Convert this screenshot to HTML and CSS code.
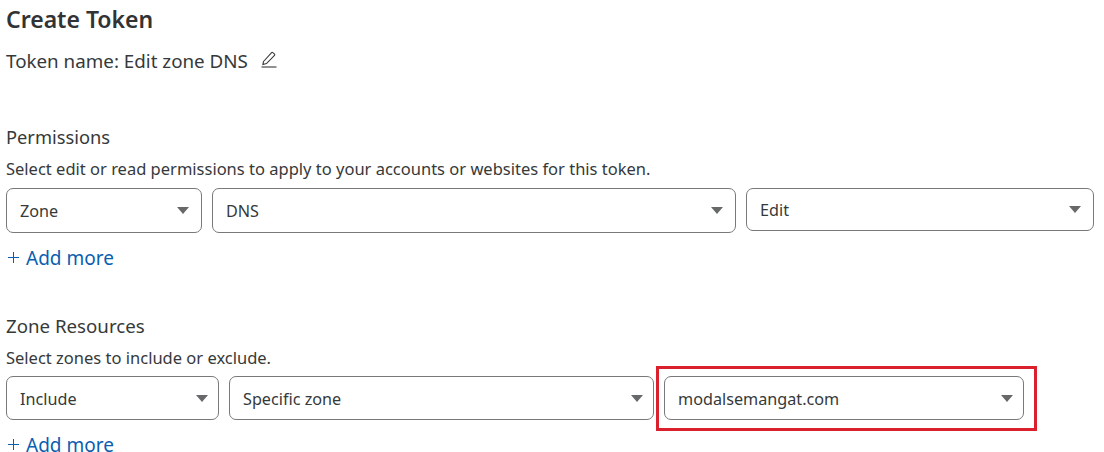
FILE: index.html
```html
<!DOCTYPE html>
<html lang="en">
<head>
<meta charset="utf-8">
<title>Create Token</title>
<link rel="stylesheet" href="styles.css">
</head>
<body>
<main class="page">
  <h1 class="title">Create Token</h1>
  <p class="token-name">
    <span>Token name: Edit zone DNS</span>
    <svg class="pencil" width="18" height="18" viewBox="0 0 18 18" fill="none" stroke="#36393a" stroke-width="1.1">
      <path d="M3.5 11.5 11.6 2.6a.9.9 0 0 1 1.3 0l1.6 1.5a.9.9 0 0 1 0 1.3l-8 8.2-3.6 1z"/>
      <path d="M1.5 17h15"/>
    </svg>
  </p>

  <section class="permissions">
    <h2 class="heading">Permissions</h2>
    <p class="hint">Select edit or read permissions to apply to your accounts or websites for this token.</p>
    <div class="row row-perm">
      <div class="select s-zone"><span>Zone</span><i class="caret"></i></div>
      <div class="select s-dns"><span>DNS</span><i class="caret"></i></div>
      <div class="select s-edit"><span>Edit</span><i class="caret"></i></div>
    </div>
    <a class="add" href="#"><svg class="plus" width="11" height="11" viewBox="0 0 11 11" fill="none" stroke="#0a5eb0" stroke-width="1"><path d="M0 5.5h11M5.5 0v11"/></svg>Add more</a>
  </section>

  <section class="resources">
    <h2 class="heading">Zone Resources</h2>
    <p class="hint">Select zones to include or exclude.</p>
    <div class="row row-res">
      <div class="select s-include"><span>Include</span><i class="caret"></i></div>
      <div class="select s-specific"><span>Specific zone</span><i class="caret"></i></div>
      <div class="select s-domain"><span>modalsemangat.com</span><i class="caret"></i><b class="highlight"></b></div>
    </div>
    <a class="add" href="#"><svg class="plus" width="11" height="11" viewBox="0 0 11 11" fill="none" stroke="#0a5eb0" stroke-width="1"><path d="M0 5.5h11M5.5 0v11"/></svg>Add more</a>
  </section>
</main>
</body>
</html>
```
FILE: styles.css
```css
* { box-sizing: border-box; }
html, body { margin: 0; background: #fff; }
body {
  width: 1104px;
  height: 452px;
  overflow: hidden;
  font-family: "Noto Sans", "Open Sans", sans-serif;
  color: #36393a;
}
.page { padding: 0 10px 0 6px; }
.title {
  margin: 0;
  padding-top: 5px;
  font-size: 23px;
  line-height: 28px;
  font-weight: 600;
  color: #313335;
}
.token-name {
  display: flex;
  align-items: center;
  gap: 12px;
  margin: 14px 0 0;
  font-size: 18.8px;
  line-height: 28px;
}
.pencil { margin-top: -4px; }
.permissions { margin-top: 49px; }
.resources { margin-top: 48px; }
.heading {
  margin: 0;
  font-size: 18.3px;
  line-height: 26px;
  font-weight: 400;
}
.resources .heading { font-size: 18.7px; }
.hint {
  margin: 9px 0 0;
  font-size: 16.5px;
  line-height: 20px;
}
.row { display: flex; gap: 10px; margin-top: 9px; }
.row-res { margin-top: 8px; }
.select {
  position: relative;
  display: flex;
  align-items: center;
  justify-content: space-between;
  height: 45px;
  padding: 1px 12px 0 13px;
  border: 1px solid #77797b;
  border-radius: 7px;
  font-size: 16.2px;
  background: #fff;
}
.caret {
  width: 0;
  height: 0;
  border-left: 6px solid transparent;
  border-right: 6px solid transparent;
  border-top: 7px solid #666869;
  margin-top: -1px;
}
.s-zone { width: 196px; }
.s-dns { width: 524px; }
.s-edit { width: 348px; height: 43px; }
.s-include { width: 213px; }
.s-specific { width: 425px; }
.s-domain { width: 360px; }
.highlight {
  position: absolute;
  left: -9px;
  top: -11px;
  width: 381px;
  height: 65px;
  border: 3px solid #d9202c;
  pointer-events: none;
}
.row-res .select { height: 44px; padding-right: 10px; }
.add {
  display: flex;
  align-items: center;
  margin-top: 18px;
  font-size: 19px;
  line-height: 14px;
  color: #0a5eb0;
  text-decoration: none;
}
.plus { margin: -1px 7px 0 2px; }
```
